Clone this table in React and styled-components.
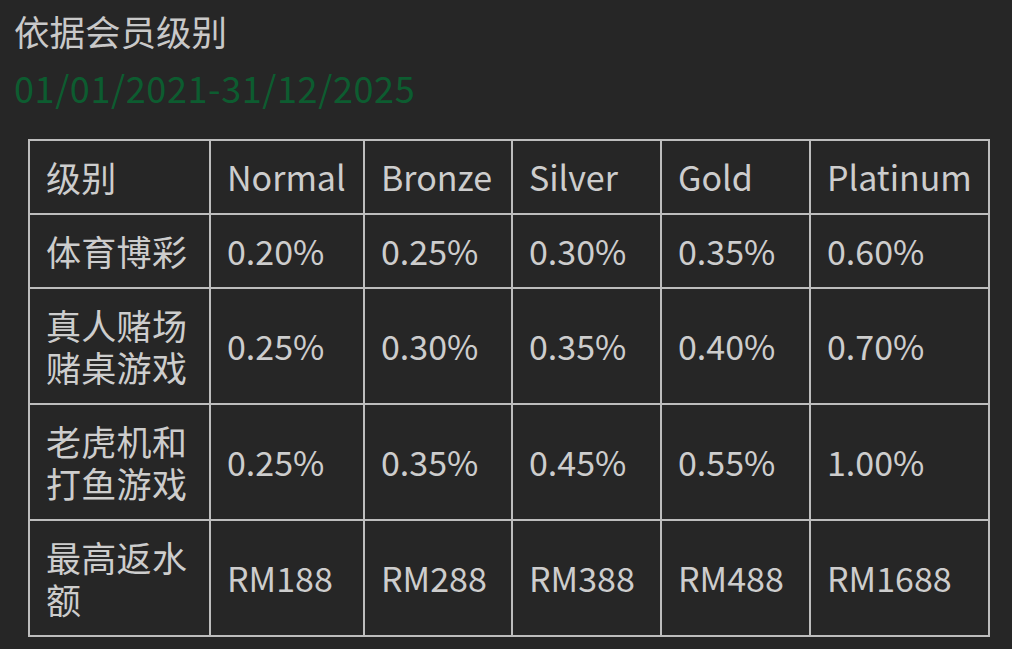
import React from "react";
import styled, { createGlobalStyle } from "styled-components";

const Global = createGlobalStyle`
  html, body { margin: 0; padding: 0; background: #262626; }
  body { font-family: "Noto Sans CJK SC", "Noto Sans", sans-serif; }
`;

const Page = styled.div`
  padding: 8px 14px 0 14px;
  color: #cbcbcb;
`;

const Title = styled.div`
  font-size: 35.5px;
  line-height: 46px;
  color: #c9c9c9;
`;

const DateLine = styled.div`
  margin-top: 10px;
  font-size: 36px;
  line-height: 46px;
  letter-spacing: 0.6px;
  color: #0d5c30;
`;

const Table = styled.table`
  margin: 29px 0 0 14px;
  border-collapse: collapse;
  table-layout: fixed;
  width: 960px;
  border: 2px solid #bdbdbd;
`;

const Cell = styled.td`
  border: 2px solid #bdbdbd;
  padding: 15px 16px;
  font-size: 34px;
  line-height: 42px;
  color: #cdcdcd;
  vertical-align: middle;
  text-align: left;
  white-space: ${(p) => (p.$nowrap ? "nowrap" : "normal")};
`;

const HeadCell = styled(Cell)`
  font-size: 35px;
  letter-spacing: 0.3px;
`;

const widths = [181, 154, 148, 149, 149, 179];
const rows = [
  ["级别", "Normal", "Bronze", "Silver", "Gold", "Platinum"],
  ["体育博彩", "0.20%", "0.25%", "0.30%", "0.35%", "0.60%"],
  ["真人赌场赌桌游戏", "0.25%", "0.30%", "0.35%", "0.40%", "0.70%"],
  ["老虎机和打鱼游戏", "0.25%", "0.35%", "0.45%", "0.55%", "1.00%"],
  ["最高返水额", "RM188", "RM288", "RM388", "RM488", "RM1688"],
];

export default function App() {
  return (
    <>
      <Global />
      <Page>
        <Title>依据会员级别</Title>
        <DateLine>01/01/2021-31/12/2025</DateLine>
        <Table>
          <colgroup>
            {widths.map((w, i) => (
              <col key={i} style={{ width: w }} />
            ))}
          </colgroup>
          <tbody>
            {rows.map((r, i) => (
              <tr key={i}>
                {r.map((c, j) =>
                  j === 0 ? (
                    <HeadCell key={j}>{c}</HeadCell>
                  ) : (
                    <Cell key={j} $nowrap>
                      {c}
                    </Cell>
                  )
                )}
              </tr>
            ))}
          </tbody>
        </Table>
      </Page>
    </>
  );
}
